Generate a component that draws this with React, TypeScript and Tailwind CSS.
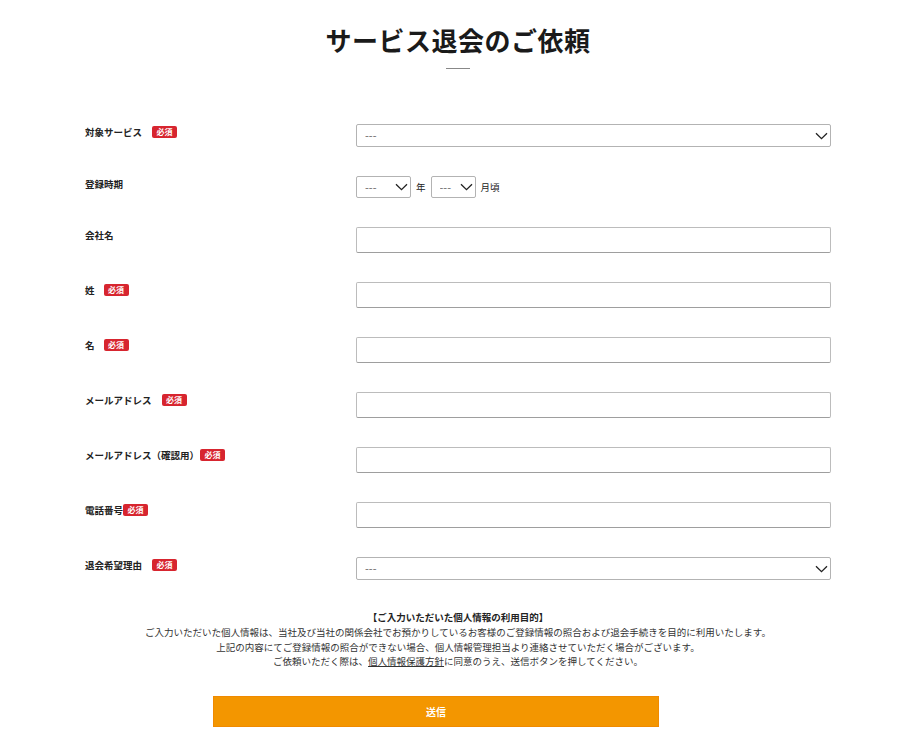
import React from 'react';

const font = { fontFamily: '"Noto Sans CJK JP", "Noto Sans", sans-serif' };

const Required = ({ className = 'ml-[10px]' }: { className?: string }) => (
  <span
    className={`${className} inline-flex h-[12px] w-[25px] shrink-0 items-center justify-center rounded-[2px] bg-[#d7252f] text-[8px] font-bold leading-none text-white`}
  >
    必須
  </span>
);

const Chevron = () => (
  <svg width="13" height="8" viewBox="0 0 13 8" fill="none" className="pointer-events-none absolute right-[3px] top-1/2 -translate-y-1/2">
    <path d="M1 1.2l5.5 5.5L12 1.2" stroke="#222" strokeWidth="1.3" />
  </svg>
);

const Select = ({ className }: { className: string }) => (
  <div className={`relative ${className}`}>
    <select className="block h-full w-full appearance-none rounded-[2px] border border-[#b3b3b3] bg-white pl-[8px] text-[11px] text-[#666] outline-none">
      <option>---</option>
    </select>
    <Chevron />
  </div>
);

const TextInput = () => (
  <input
    type="text"
    className="block h-[26px] w-full rounded-[2px] border border-[#bcbcbc] border-b-[#9e9e9e] bg-white px-2 text-[10px] outline-none"
  />
);

type Row = {
  label: string;
  badge?: string;
  field: 'select' | 'period' | 'input';
};

const rows: Row[] = [
  { label: '対象サービス', badge: 'ml-[10px]', field: 'select' },
  { label: '登録時期', field: 'period' },
  { label: '会社名', field: 'input' },
  { label: '姓', badge: 'ml-[9px]', field: 'input' },
  { label: '名', badge: 'ml-[9px]', field: 'input' },
  { label: 'メールアドレス', badge: 'ml-[10px]', field: 'input' },
  { label: 'メールアドレス（確認用）', badge: 'ml-[1px]', field: 'input' },
  { label: '電話番号', badge: 'ml-0', field: 'input' },
  { label: '退会希望理由', badge: 'ml-[10px]', field: 'select' },
];

export default function App() {
  return (
    <div className="min-h-[752px] w-[900px] bg-white text-[#222]" style={font}>
      {/* Title */}
      <div className="ml-[85px] w-[746px] pt-[26px] text-center">
        <h1 className="text-[26px] font-bold leading-[28px] tracking-[0.5px] text-[#1a1a1a]">サービス退会のご依頼</h1>
        <div className="mx-auto mt-[14px] h-px w-[24px] bg-[#888]" />
      </div>

      {/* Form rows */}
      <div className="ml-[85px] mt-[55px] flex w-[746px] flex-col gap-[29px]">
        {rows.map((row) => (
          <div key={row.label} className="grid grid-cols-[271px_475px]">
            <div className="flex items-center self-start pt-[1px] text-[9.5px] font-bold leading-[14px]">
              <span>{row.label}</span>
              {row.badge && <Required className={row.badge} />}
            </div>
            <div>
              {row.field === 'select' && <Select className="h-[23px] w-full" />}
              {row.field === 'input' && <TextInput />}
              {row.field === 'period' && (
                <div className="flex h-[22px] items-center text-[9.5px]">
                  <Select className="h-[22px] w-[55px]" />
                  <span className="ml-[5px]">年</span>
                  <Select className="ml-[5px] h-[22px] w-[45px]" />
                  <span className="ml-[5px]">月頃</span>
                </div>
              )}
            </div>
          </div>
        ))}
      </div>

      {/* Notice */}
      <div className="ml-[85px] mt-[30px] w-[746px] text-center text-[9.5px] leading-[14.8px] text-[#333]">
        <p className="font-bold text-[#222]">【ご入力いただいた個人情報の利用目的】</p>
        <p>ご入力いただいた個人情報は、当社及び当社の関係会社でお預かりしているお客様のご登録情報の照合および退会手続きを目的に利用いたします。</p>
        <p>上記の内容にてご登録情報の照合ができない場合、個人情報管理担当より連絡させていただく場合がございます。</p>
        <p>
          ご依頼いただく際は、<a href="#" className="underline">個人情報保護方針</a>に同意のうえ、送信ボタンを押してください。
        </p>
      </div>

      {/* Submit */}
      <div className="ml-[213px] mt-[27px] w-[446px]">
        <button
          type="button"
          className="block h-[31px] w-full border border-[#f08a00] bg-[#f39600] text-[10px] font-bold text-white"
        >
          送信
        </button>
      </div>
    </div>
  );
}
